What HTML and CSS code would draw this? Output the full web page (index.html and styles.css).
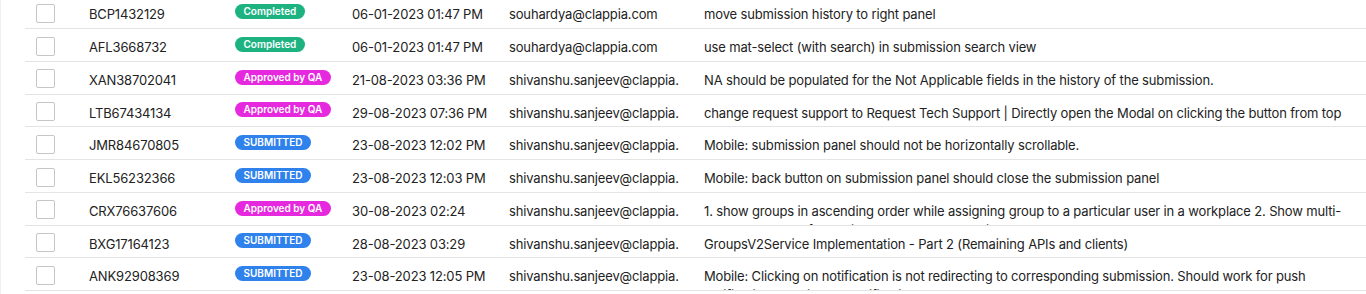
FILE: index.html
```html
<!DOCTYPE html>
<html lang="en">
<head>
<meta charset="utf-8">
<title>Submissions</title>
<link rel="stylesheet" href="styles.css">
</head>
<body>
<div class="panel">
  <div class="table">
    <div class="row">
      <div class="cell check"><span class="box"></span></div>
      <div class="cell id">BCP1432129</div>
      <div class="cell status"><span class="badge completed">Completed</span></div>
      <div class="cell date">06-01-2023 01:47 PM</div>
      <div class="cell email">souhardya@clappia.com</div>
      <div class="cell desc">move submission history to right panel</div>
    </div>
    <div class="row">
      <div class="cell check"><span class="box"></span></div>
      <div class="cell id">AFL3668732</div>
      <div class="cell status"><span class="badge completed">Completed</span></div>
      <div class="cell date">06-01-2023 01:47 PM</div>
      <div class="cell email">souhardya@clappia.com</div>
      <div class="cell desc">use mat-select (with search) in submission search view</div>
    </div>
    <div class="row">
      <div class="cell check"><span class="box"></span></div>
      <div class="cell id">XAN38702041</div>
      <div class="cell status"><span class="badge qa">Approved by QA</span></div>
      <div class="cell date">21-08-2023 03:36 PM</div>
      <div class="cell email">shivanshu.sanjeev@clappia.com</div>
      <div class="cell desc">NA should be populated for the Not Applicable fields in the history of the submission.</div>
    </div>
    <div class="row">
      <div class="cell check"><span class="box"></span></div>
      <div class="cell id">LTB67434134</div>
      <div class="cell status"><span class="badge qa">Approved by QA</span></div>
      <div class="cell date">29-08-2023 07:36 PM</div>
      <div class="cell email">shivanshu.sanjeev@clappia.com</div>
      <div class="cell desc">change request support to Request Tech Support | Directly open the Modal on clicking the button from top right corner of the submission panel</div>
    </div>
    <div class="row">
      <div class="cell check"><span class="box"></span></div>
      <div class="cell id">JMR84670805</div>
      <div class="cell status"><span class="badge submitted">SUBMITTED</span></div>
      <div class="cell date">23-08-2023 12:02 PM</div>
      <div class="cell email">shivanshu.sanjeev@clappia.com</div>
      <div class="cell desc">Mobile: submission panel should not be horizontally scrollable.</div>
    </div>
    <div class="row">
      <div class="cell check"><span class="box"></span></div>
      <div class="cell id">EKL56232366</div>
      <div class="cell status"><span class="badge submitted">SUBMITTED</span></div>
      <div class="cell date">23-08-2023 12:03 PM</div>
      <div class="cell email">shivanshu.sanjeev@clappia.com</div>
      <div class="cell desc">Mobile: back button on submission panel should close the submission panel</div>
    </div>
    <div class="row">
      <div class="cell check"><span class="box"></span></div>
      <div class="cell id">CRX76637606</div>
      <div class="cell status"><span class="badge qa">Approved by QA</span></div>
      <div class="cell date">30-08-2023 02:24 AM</div>
      <div class="cell email">shivanshu.sanjeev@clappia.com</div>
      <div class="cell desc">1. show groups in ascending order while assigning group to a particular user in a workplace 2. Show multi-select dropdown for adding groups to the user in the workplace</div>
    </div>
    <div class="row">
      <div class="cell check"><span class="box"></span></div>
      <div class="cell id">BXG17164123</div>
      <div class="cell status"><span class="badge submitted">SUBMITTED</span></div>
      <div class="cell date">28-08-2023 03:29 AM</div>
      <div class="cell email">shivanshu.sanjeev@clappia.com</div>
      <div class="cell desc">GroupsV2Service Implementation - Part 2 (Remaining APIs and clients)</div>
    </div>
    <div class="row">
      <div class="cell check"><span class="box"></span></div>
      <div class="cell id">ANK92908369</div>
      <div class="cell status"><span class="badge submitted">SUBMITTED</span></div>
      <div class="cell date">23-08-2023 12:05 PM</div>
      <div class="cell email">shivanshu.sanjeev@clappia.com</div>
      <div class="cell desc">Mobile: Clicking on notification is not redirecting to corresponding submission. Should work for push notifications and in-app notifications both</div>
    </div>
  </div>
</div>
</body>
</html>
```

FILE: styles.css
```css
* { box-sizing: border-box; }
html, body {
  margin: 0;
  padding: 0;
  background: #ffffff;
  overflow: hidden;
}
body {
  width: 1366px;
  height: 294px;
  font-family: Inter, "Noto Sans", sans-serif;
  font-size: 13px;
  letter-spacing: -0.15px;
  color: #222222;
}
.panel {
  height: 294px;
  border-left: 1px solid #f1f1f1;
  padding-left: 24px;
  overflow: hidden;
}
.table {
  margin-top: -3.75px;
}
.row {
  display: grid;
  grid-template-columns: 50px 146px 117px 157px 195px 1fr;
  height: 32.75px;
  border-bottom: 1px solid #e4e4e4;
  overflow: hidden;
}
.cell {
  padding: 9px 0 0 14px;
  line-height: 19px;
  overflow: hidden;
  overflow-wrap: anywhere;
}
.check {
  padding: 7.5px 0 0 11px;
}
.box {
  display: block;
  width: 19px;
  height: 19px;
  border: 1px solid #c3c6ca;
  border-radius: 2px;
  background: #fff;
}
.status {
  padding-top: 7.75px;
  line-height: 15px;
}
.badge {
  display: inline-block;
  height: 15px;
  line-height: 15px;
  padding: 0 8.5px;
  border-radius: 8px;
  color: #fff;
  font-size: 10px;
  font-weight: 600;
  letter-spacing: 0;
  white-space: nowrap;
  vertical-align: top;
}
.completed { background: #1db381; }
.qa { background: #e628df; }
.submitted { background: #2f82ec; }
.date {
  padding-right: 7px;
  overflow-wrap: normal;
}
.email { padding-right: 8px; }
.desc { padding-right: 14px; overflow-wrap: normal; }
```
